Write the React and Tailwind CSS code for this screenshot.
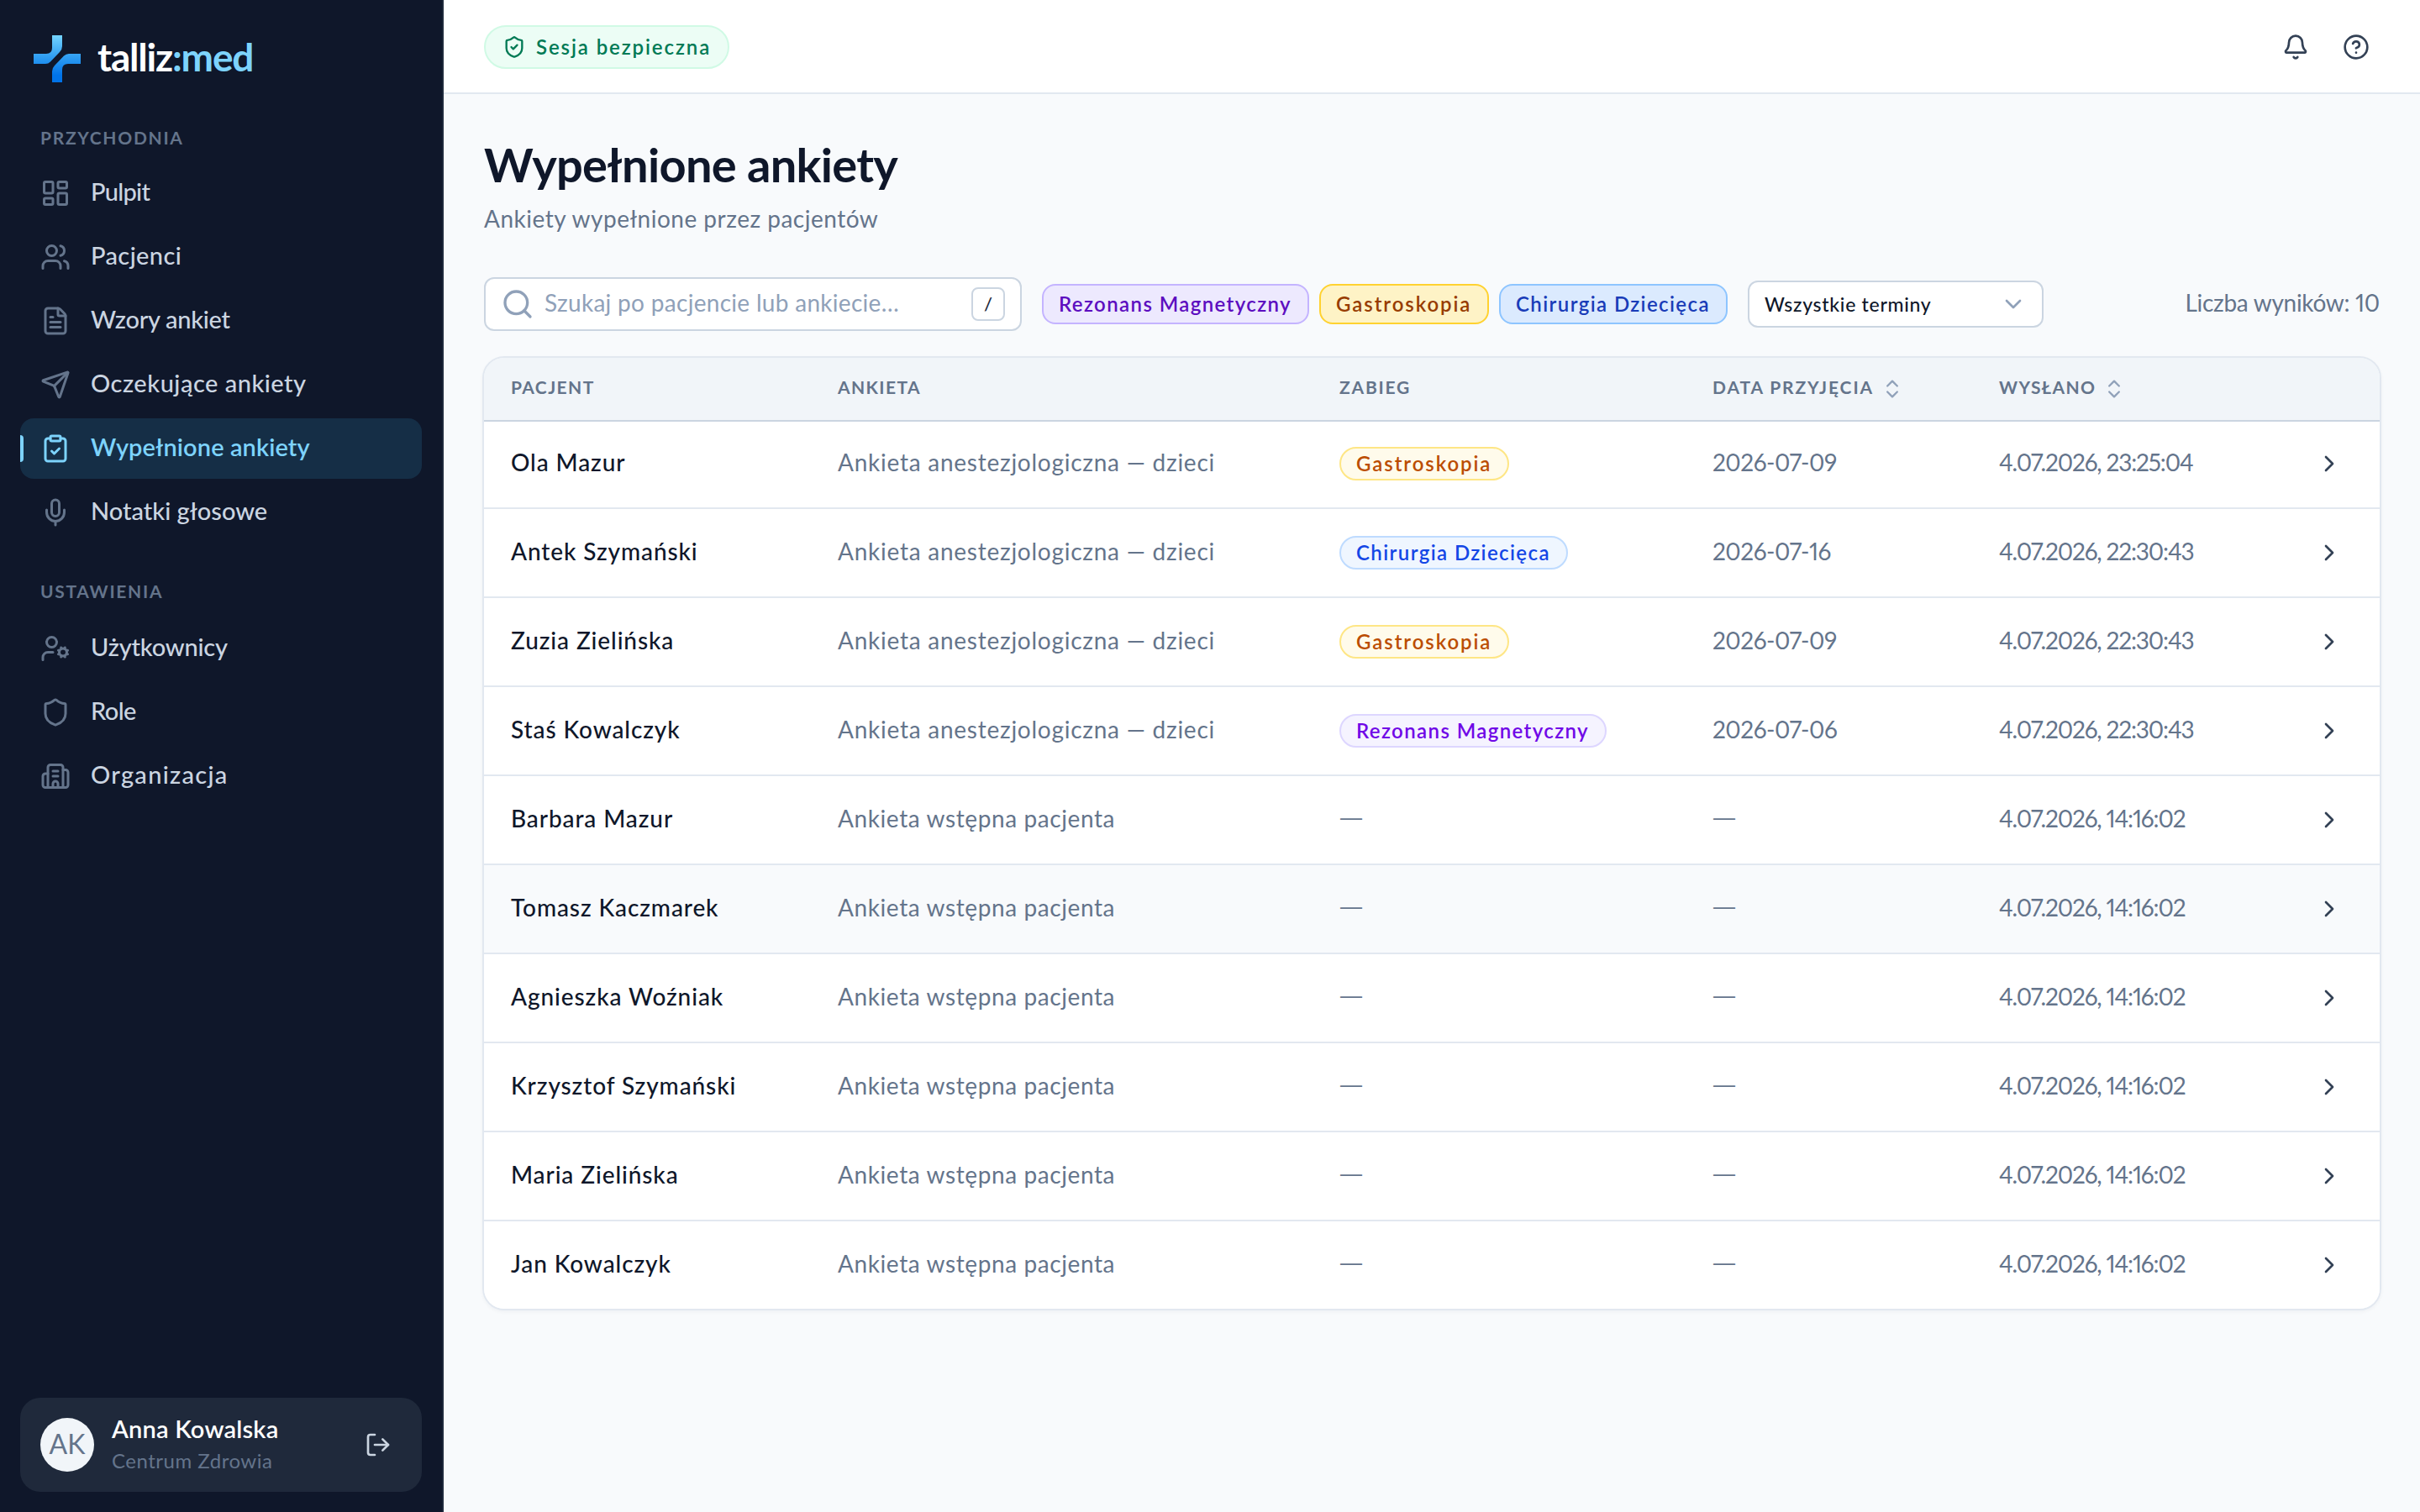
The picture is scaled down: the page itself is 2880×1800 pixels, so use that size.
import React from "react";
import {
  Bell,
  ChevronDown,
  ChevronRight,
  ChevronsUpDown,
  CircleHelp,
  ClipboardCheck,
  FileText,
  LayoutDashboard,
  LogOut,
  Mic,
  Search,
  Send,
  Shield,
  ShieldCheck,
  Users,
} from "lucide-react";

/* Building with side wings */
function OfficeIcon({ className }) {
  return (
    <svg className={className} viewBox="0 0 24 24" fill="none" stroke="currentColor" strokeWidth="2" strokeLinecap="round" strokeLinejoin="round">
      <path d="M10 12h4M10 8h4" />
      <path d="M14 21v-3a2 2 0 0 0-4 0v3" />
      <path d="M6 10H4a2 2 0 0 0-2 2v7a2 2 0 0 0 2 2h16a2 2 0 0 0 2-2V9a2 2 0 0 0-2-2h-2" />
      <path d="M6 21V5a2 2 0 0 1 2-2h8a2 2 0 0 1 2 2v16" />
    </svg>
  );
}

/* Person with a small gear */
function UserGearIcon({ className }) {
  return (
    <svg className={className} viewBox="0 0 24 24" fill="none" stroke="currentColor" strokeWidth="2" strokeLinecap="round" strokeLinejoin="round">
      <path d="M10 15H6a4 4 0 0 0-4 4v2" />
      <path d="m14.305 16.53.923-.382M15.228 13.852l-.923-.383M16.852 12.228l-.383-.923M16.852 17.772l-.383.924M19.148 12.228l.383-.923M19.53 18.696l-.382-.924M20.772 13.852l.924-.383M20.772 16.148l.924.383" />
      <circle cx="18" cy="15" r="3" />
      <circle cx="9" cy="7" r="4" />
    </svg>
  );
}

const CLINIC_LINKS = [
  { label: "Pulpit", icon: LayoutDashboard, tracking: "tracking-[-0.7px]" },
  { label: "Pacjenci", icon: Users, tracking: "tracking-[0.4px]" },
  { label: "Wzory ankiet", icon: FileText, tracking: "tracking-[-0.3px]" },
  { label: "Oczekujące ankiety", icon: Send, tracking: "tracking-[0.5px]" },
  { label: "Wypełnione ankiety", icon: ClipboardCheck, active: true, tracking: "tracking-[0.1px]" },
  { label: "Notatki głosowe", icon: Mic },
];

const SETTINGS_LINKS = [
  { label: "Użytkownicy", icon: UserGearIcon, tracking: "tracking-[-0.2px]" },
  { label: "Role", icon: Shield, tracking: "tracking-[-0.6px]" },
  { label: "Organizacja", icon: OfficeIcon, tracking: "tracking-[1.3px]" },
];

const CHIPS = [
  { label: "Rezonans Magnetyczny", style: "w-[318px] tracking-[1.4px] bg-[#ede9fe] border-[#c4b4ff] text-[#5d0ec0]" },
  { label: "Gastroskopia", style: "w-[202px] tracking-[1.9px] bg-[#fef3c6] border-[#ffd230] text-[#973c00]" },
  { label: "Chirurgia Dziecięca", style: "w-[272px] tracking-[1.4px] bg-[#dbeafe] border-[#8ec5ff] text-[#193cb8]" },
];

const BADGES = {
  "Rezonans Magnetyczny": "w-[318px] tracking-[1.4px] bg-[#f5f3ff] border-[#ddd6ff] text-[#7008e7]",
  "Gastroskopia": "w-[202px] tracking-[1.9px] bg-[#fffbeb] border-[#fee685] text-[#bb4d00]",
  "Chirurgia Dziecięca": "w-[272px] tracking-[1.4px] bg-[#eff6ff] border-[#bedbff] text-[#1447e6]",
};

const KIDS = "Ankieta anestezjologiczna — dzieci";
const INTAKE = "Ankieta wstępna pacjenta";

const ROWS = [
  { name: "Ola Mazur", form: KIDS, procedure: "Gastroskopia", date: "2026-07-09", sent: "4.07.2026, 23:25:04" },
  { name: "Antek Szymański", form: KIDS, procedure: "Chirurgia Dziecięca", date: "2026-07-16", sent: "4.07.2026, 22:30:43" },
  { name: "Zuzia Zielińska", form: KIDS, procedure: "Gastroskopia", date: "2026-07-09", sent: "4.07.2026, 22:30:43" },
  { name: "Staś Kowalczyk", form: KIDS, procedure: "Rezonans Magnetyczny", date: "2026-07-06", sent: "4.07.2026, 22:30:43" },
  { name: "Barbara Mazur", form: INTAKE, sent: "4.07.2026, 14:16:02" },
  { name: "Tomasz Kaczmarek", form: INTAKE, sent: "4.07.2026, 14:16:02", hovered: true },
  { name: "Agnieszka Woźniak", form: INTAKE, sent: "4.07.2026, 14:16:02" },
  { name: "Krzysztof Szymański", form: INTAKE, sent: "4.07.2026, 14:16:02" },
  { name: "Maria Zielińska", form: INTAKE, sent: "4.07.2026, 14:16:02" },
  { name: "Jan Kowalczyk", form: INTAKE, sent: "4.07.2026, 14:16:02" },
];

const GRID = "grid grid-cols-[389px_597px_444px_341px_1fr] pl-8";

function Logo() {
  return (
    <div className="flex items-center h-14 mt-[42px] ml-10 gap-5">
      <svg className="w-14 h-14 shrink-0" viewBox="0 0 56 56">
        <defs>
          <linearGradient id="mark" gradientUnits="userSpaceOnUse" x1="28" y1="0" x2="28" y2="56">
            <stop offset="0" stopColor="#74d4ff" />
            <stop offset="0.45" stopColor="#319ff2" />
            <stop offset="0.85" stopColor="#0073e8" />
            <stop offset="1" stopColor="#0073e8" />
          </linearGradient>
        </defs>
        <g fill="url(#mark)">
          <path d="M22 0H34V13Q34 17 31 20L20 31.5Q17.5 34 14 34H0V22H15Q22 22 22 15Z" />
          <path d="M34 56H22V43Q22 39 25 36L36 24.5Q38.5 22 42 22H56V34H41Q34 34 34 41Z" />
        </g>
      </svg>
      <span className="text-[46px] leading-[56px] pb-1 font-bold tracking-[-1.2px] text-white">
        talliz<span className="text-[#7dd3fc]">:med</span>
      </span>
    </div>
  );
}

function NavLink({ label, icon: Icon, active, tracking = "tracking-normal" }) {
  return (
    <div className={active
      ? "relative flex items-center gap-6 h-[72px] pl-6 rounded-2xl bg-[#152e46] text-[#7dd3fc] font-semibold"
      : "relative flex items-center gap-6 h-[72px] pl-6 text-[#cbd5e1] font-medium"}>
      {active && <span className="absolute left-0 top-5 w-1 h-8 rounded-r bg-[#7dd3fc]" />}
      <Icon className={active ? "w-9 h-9" : "w-9 h-9 text-[#64748b]"} />
      <span className={`text-[29px] leading-9 pb-[5px] whitespace-nowrap ${tracking}`}>{label}</span>
    </div>
  );
}

function NavTitle({ children }) {
  return <div className="pl-6 text-[21px] leading-7 font-bold tracking-[1.7px] text-[#64748b]">{children}</div>;
}

function Sidebar() {
  return (
    <aside className="w-[528px] shrink-0 h-full flex flex-col bg-[#0f172a] border-r-2 border-[#1e293b]">
      <Logo />
      <nav className="px-6 mt-[52px]">
        <NavTitle>PRZYCHODNIA</NavTitle>
        <div className="flex flex-col gap-1 mt-4">
          {CLINIC_LINKS.map((l) => <NavLink key={l.label} {...l} />)}
        </div>
        <div className="mt-[44px]">
          <NavTitle>USTAWIENIA</NavTitle>
        </div>
        <div className="flex flex-col gap-1 mt-[18px]">
          {SETTINGS_LINKS.map((l) => <NavLink key={l.label} {...l} />)}
        </div>
      </nav>
      <div className="mt-auto mx-6 mb-6 h-28 rounded-3xl bg-[#1f293b] flex items-center pl-6 pr-9">
        <div className="w-16 h-16 rounded-full bg-[#f1f5f9] text-[#64748b] flex items-center justify-center text-[32px] leading-8 pb-[3px]">AK</div>
        <div className="ml-[21px] flex flex-col gap-0.5 -mt-px">
          <span className="text-[29px] leading-9 font-semibold tracking-[0.2px] text-white">Anna Kowalska</span>
          <span className="text-[24px] leading-9 tracking-[0.5px] text-[#64748b]">Centrum Zdrowia</span>
        </div>
        <LogOut className="ml-auto w-8 h-8 text-[#cbd5e1]" />
      </div>
    </aside>
  );
}

function TopBar() {
  return (
    <header className="h-28 shrink-0 bg-white border-b-2 border-[#e2e8f0] flex items-center justify-between pt-0.5 pl-12 pr-[60px]">
      <div className="w-[292px] h-[52px] rounded-full border-2 border-[#d0fae5] bg-[#ecfdf5] text-[#007a55] flex items-center gap-3 pl-5">
        <ShieldCheck className="w-7 h-7" />
        <span className="text-[24px] leading-7 pb-px font-semibold tracking-[1.9px] whitespace-nowrap">Sesja bezpieczna</span>
      </div>
      <div className="flex gap-10 text-[#334155]">
        <Bell className="w-8 h-8" />
        <CircleHelp className="w-8 h-8" />
      </div>
    </header>
  );
}

function Filters() {
  return (
    <div className="flex items-center h-16 mt-[52px]">
      <div className="w-[640px] h-16 rounded-xl border-2 border-[#cbd5e1] bg-white flex items-center pl-[18px] pr-[18px]">
        <Search className="w-10 h-10 text-[#90a1b9]" />
        <span className="ml-3 text-[28px] leading-9 pb-1 tracking-[0.3px] text-[#90a1b9] whitespace-nowrap">Szukaj po pacjencie lub ankiecie…</span>
        <span className="ml-auto w-10 h-10 rounded-lg border-2 border-[#cbd5e1] flex items-center justify-center text-[22px] leading-none font-medium text-[#1e293b]">/</span>
      </div>
      <div className="flex gap-3 ml-6">
        {CHIPS.map((c) => (
          <span key={c.label} className={`h-12 rounded-2xl border-2 flex items-center pl-[18px] text-[24px] leading-none font-semibold whitespace-nowrap ${c.style}`}>
            {c.label}
          </span>
        ))}
      </div>
      <div className="ml-6 w-[352px] h-14 rounded-xl border-2 border-[#cbd5e1] bg-white flex items-center justify-between pl-[18px] pr-[18px]">
        <span className="text-[23px] leading-7 tracking-[0.7px] font-medium text-[#0f172a]">Wszystkie terminy</span>
        <ChevronDown className="w-8 h-8 text-[#90a1b9]" />
      </div>
      <span className="ml-auto text-[28px] leading-9 pb-1 tracking-[-0.3px] proportional-nums text-[#64748b]">Liczba wyników: 10</span>
    </div>
  );
}

function HeaderCell({ children, sortable, className = "" }) {
  return (
    <div className="flex items-center gap-2">
      <span className={`pb-[5px] ${className}`}>{children}</span>
      {sortable && <ChevronsUpDown className="w-7 h-7 text-[#90a1b9]" />}
    </div>
  );
}

function Dash() {
  return <span className="pb-[6px] pl-px text-[26px] font-['Liberation_Sans',sans-serif]">—</span>;
}

function Row({ name, form, procedure, date, sent, hovered, last }) {
  return (
    <div className={`${GRID} items-center text-[28px] leading-9 text-[#64748b] whitespace-nowrap ${last ? "h-[104px]" : "h-[106px] border-b-2 border-[#e2e8f0]"} ${hovered ? "bg-[#f8fafc]" : "bg-white"}`}>
      <span className="pb-[5px] font-medium tracking-[0.9px] text-[#0f172a]">{name}</span>
      <span className={form === KIDS ? "pb-[5px] tracking-[0.75px]" : "pb-[5px] tracking-[0.6px]"}>{form}</span>
      {procedure ? (
        <span className={`h-10 rounded-full border-2 flex items-center pl-[18px] text-[24px] leading-none font-semibold ${BADGES[procedure]}`}>
          {procedure}
        </span>
      ) : <Dash />}
      {date ? <span className="pb-[5px] tracking-[-0.5px] proportional-nums">{date}</span> : <Dash />}
      <span className="flex items-center justify-between pr-[44px]">
        <span className="pb-[5px] proportional-nums tracking-[-1.15px]">{sent}</span>
        <ChevronRight className="w-8 h-8 text-[#334155]" />
      </span>
    </div>
  );
}

function SurveyTable() {
  return (
    <div className="-mx-0.5 mt-[30px] rounded-[26px] border-2 border-[#e2e8f0] overflow-hidden shadow-[0_2px_4px_rgba(15,23,42,0.04)]">
      {/* header rule sits on the first row's top edge */}
      <div className={`${GRID} relative -mb-0.5 items-center h-[76px] bg-[#f1f5f9] border-b-2 border-[#cbd5e1] text-[21px] leading-7 font-bold tracking-[1.4px] text-[#64748b]`}>
        <HeaderCell>PACJENT</HeaderCell>
        <HeaderCell>ANKIETA</HeaderCell>
        <HeaderCell className="tracking-[1.8px]">ZABIEG</HeaderCell>
        <HeaderCell sortable className="tracking-[1.9px]">DATA PRZYJĘCIA</HeaderCell>
        <HeaderCell sortable>WYSŁANO</HeaderCell>
      </div>
      {ROWS.map((r, i) => <Row key={r.name} {...r} last={i === ROWS.length - 1} />)}
    </div>
  );
}

export default function App() {
  return (
    <div className="w-[2880px] h-[1800px] flex overflow-hidden bg-[#f8fafc] font-['Lato',sans-serif]">
      <Sidebar />
      <div className="flex-1 flex flex-col min-w-0">
        <TopBar />
        <main className="px-12 pt-12">
          <h1 className="text-[56px] leading-[72px] font-bold tracking-[-0.7px] text-[#0f172a]">Wypełnione ankiety</h1>
          <p className="mt-[10px] text-[28px] leading-9 tracking-[0.5px] text-[#64748b]">Ankiety wypełnione przez pacjentów</p>
          <Filters />
          <SurveyTable />
        </main>
      </div>
    </div>
  );
}
